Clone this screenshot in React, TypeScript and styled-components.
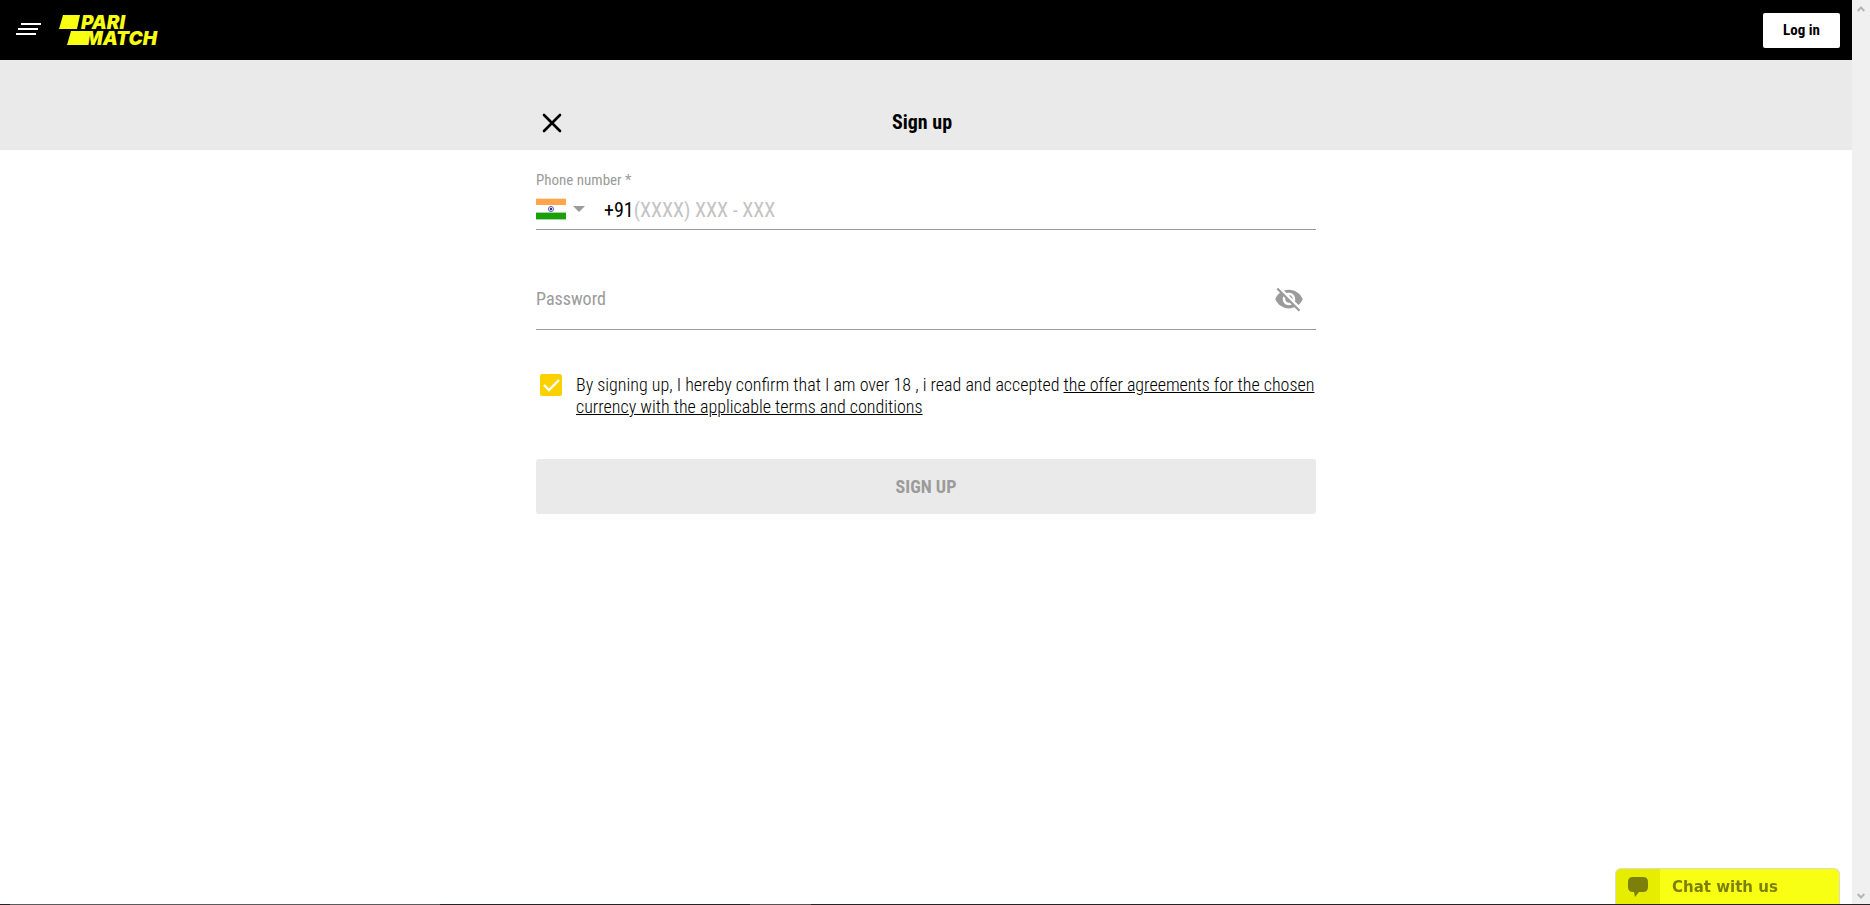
import React, { useState } from "react";
import styled, { createGlobalStyle } from "styled-components";
import { MdVisibilityOff } from "react-icons/md";

const condensed = `"Roboto Condensed", "Liberation Sans Narrow", Roboto, sans-serif`;

const GlobalStyle = createGlobalStyle`
  *, *::before, *::after { box-sizing: border-box; }
  body { margin: 0; background: #fff; color: #000; font-family: ${condensed}; }
  button, input, select { font-family: inherit; margin: 0; }
`;

const Shell = styled.div`
  display: flex;
  min-height: 100vh;
`;

const Page = styled.div`
  flex: 1;
  min-width: 0;
`;

const TopBar = styled.header`
  display: flex;
  align-items: center;
  height: 60px;
  padding: 0 12px 0 14px;
  background: #000;
`;

const IconButton = styled.button`
  display: flex;
  padding: 0;
  border: 0;
  background: none;
  color: inherit;
  cursor: pointer;
`;

const LogoLink = styled.a`
  display: flex;
  margin-left: 17px;
`;

const LoginButton = styled.button`
  width: 77px;
  height: 35px;
  margin-left: auto;
  padding: 0;
  border: 0;
  border-radius: 2px;
  background: #fff;
  color: #000;
  font-size: 15px;
  font-weight: 700;
`;

const TitleBand = styled.div`
  display: flex;
  align-items: flex-end;
  height: 90px;
  background: #eaeaea;
`;

const Column = styled.div`
  width: 100%;
  max-width: 780px;
  margin: 0 auto;
`;

const TitleRow = styled(Column)`
  display: grid;
  grid-template-columns: 32px 1fr 40px;
  align-items: center;
  height: 56px;
`;

const Title = styled.h1`
  margin: 0;
  font-size: 20px;
  line-height: 24px;
  font-weight: 700;
  text-align: center;
`;

const Form = styled.form`
  display: flex;
  flex-direction: column;
  padding-top: 20px;
`;

const Field = styled.div`
  border-bottom: 1px solid #9b9b9b;
`;

const FieldLabel = styled.label`
  display: block;
  color: #9b9b9b;
  font-size: 15px;
  line-height: 20px;
`;

const FieldRow = styled.div`
  display: flex;
  align-items: center;
  height: 39px;
`;

const Country = styled.div`
  position: relative;
  display: flex;
  align-items: center;
  gap: 7px;
  width: 68px;
  padding-bottom: 2px;
`;

const CountrySelect = styled.select`
  position: absolute;
  inset: 0;
  width: 100%;
  opacity: 0;
`;

const DialCode = styled.span`
  font-size: 20px;
`;

const TextInput = styled.input<{ $size: number; $hint: string }>`
  flex: 1;
  min-width: 0;
  padding: 0;
  border: 0;
  outline: 0;
  background: none;
  color: #000;
  font-size: ${(p) => p.$size}px;
  &::placeholder {
    color: ${(p) => p.$hint};
    opacity: 1;
  }
`;

const PasswordField = styled(Field)`
  display: flex;
  align-items: center;
  height: 64px;
  margin-top: 36px;
  padding: 2px 12px 0 0;
  color: #9b9b9b;
`;

const Consent = styled.div`
  display: flex;
  align-items: flex-start;
  gap: 14px;
  margin-top: 44px;
  padding-left: 4px;
`;

const CheckWrap = styled.span`
  position: relative;
  display: flex;
  flex: none;
`;

const Checkbox = styled.input`
  appearance: none;
  width: 22px;
  height: 22px;
  margin: 0;
  border: 2px solid #fcd100;
  border-radius: 2px;
  &:checked { background: #fcd100; }
`;

const CheckMark = styled.svg`
  position: absolute;
  inset: 0;
  pointer-events: none;
`;

const ConsentText = styled.label`
  color: #000;
  font-size: 18px;
  font-weight: 300;
  line-height: 22px;
  a { color: inherit; }
`;

const SubmitButton = styled.button`
  height: 55px;
  margin-top: 41px;
  border: 0;
  border-radius: 3px;
  background: #eaeaea;
  color: #9b9b9b;
  font-size: 18px;
  font-weight: 700;
`;

const ScrollTrack = styled.div`
  display: flex;
  flex-direction: column;
  justify-content: space-between;
  align-items: center;
  width: 18px;
  padding: 5px 0;
  background: #f0f0f0;
`;

const ChatButton = styled.button`
  position: fixed;
  right: 30px;
  bottom: 0;
  display: flex;
  width: 225px;
  height: 37px;
  padding: 0;
  overflow: hidden;
  border: 1px solid #dcdcc8;
  border-bottom: 0;
  border-radius: 6px 6px 0 0;
  background: #f8ff13;
  color: #7c800a;
`;

const ChatIcon = styled.span`
  display: flex;
  align-items: center;
  justify-content: center;
  width: 44px;
  height: 100%;
  background: #e6ed00;
`;

const ChatText = styled.span`
  padding-left: 12px;
  font-family: "DejaVu Sans", Verdana, sans-serif;
  font-size: 15px;
  line-height: 36px;
  font-weight: 700;
`;

const BottomEdge = styled.div`
  position: fixed;
  left: 0;
  right: 0;
  bottom: 0;
  height: 1px;
  background: linear-gradient(90deg, #2b2024 10px, #5c5a5b 10px 440px, #2b2024 440px 750px, #5c5052 750px 811px, #2b2024 811px);
`;

function Logo() {
  return (
    <svg width="110" height="44" viewBox="0 0 110 44" fill="#f8ff13" role="img" aria-label="Parimatch">
      <path d="M4 7H21L18 21H0Z" />
      <path d="M12 23H30L27 37H8Z" />
      <g fontFamily="Inter" fontSize="19" fontWeight="900" fontStyle="italic" textAnchor="end">
        <text x="66" y="21">PARI</text>
        <text x="98" y="37">MATCH</text>
      </g>
    </svg>
  );
}

function IndiaFlag() {
  return (
    <svg width="30" height="22" viewBox="0 0 30 22" aria-hidden="true">
      <path fill="#ffa44a" d="M0 1h30v6H0z" />
      <path fill="#ffe0c0" d="M0 0h30v1H0z" />
      <path fill="#1a9f0b" d="M0 15h30v6H0z" />
      <path fill="#a3d89d" d="M0 14h30v1H0zM0 21h30v1H0z" />
      <circle cx="15" cy="11" r="2.6" fill="#e6e6f8" stroke="#6a6abb" />
      <circle cx="15" cy="11" r="1.2" fill="#2a2a98" />
    </svg>
  );
}

function ScrollArrow({ up }: { up?: boolean }) {
  return (
    <svg width="8" height="8" viewBox="0 0 8 8" fill="none" stroke="#b5b5b5" strokeWidth="2" aria-hidden="true">
      <path d={up ? "M.7 6L4 2.5L7.3 6" : "M.7 2L4 5.5L7.3 2"} />
    </svg>
  );
}

export default function App() {
  const [accepted, setAccepted] = useState(true);
  const [visible, setVisible] = useState(false);
  return (
    <>
      <GlobalStyle />
      <Shell>
        <Page>
          <TopBar>
            <IconButton aria-label="Menu">
              <svg width="28" height="16" viewBox="0 0 28 16" fill="none" stroke="#fff" strokeWidth="2">
                <path d="M7 2H27M4 7H24M2 12H22" />
              </svg>
            </IconButton>
            <LogoLink href="#"><Logo /></LogoLink>
            <LoginButton>Log in</LoginButton>
          </TopBar>
          <TitleBand>
            <TitleRow>
              <IconButton aria-label="Close">
                <svg width="32" height="32" viewBox="0 0 32 32" fill="none" stroke="#000" strokeWidth="2.6">
                  <path d="M8 9L24 25M24 9L8 25" strokeLinecap="round" />
                </svg>
              </IconButton>
              <Title>Sign up</Title>
            </TitleRow>
          </TitleBand>
          <Column>
            <Form onSubmit={(e) => e.preventDefault()}>
              <Field>
                <FieldLabel htmlFor="phone">Phone number *</FieldLabel>
                <FieldRow>
                  <Country>
                    <IndiaFlag />
                    <svg width="12" height="6" viewBox="0 0 12 6" aria-hidden="true">
                      <path d="M0 0H12L6 6Z" fill="#9b9b9b" />
                    </svg>
                    <CountrySelect aria-label="Country"><option>India</option></CountrySelect>
                  </Country>
                  <DialCode>+91</DialCode>
                  <TextInput id="phone" type="tel" placeholder="(XXXX) XXX - XXX" $size={20} $hint="#c3c3c3" />
                </FieldRow>
              </Field>
              <PasswordField>
                <TextInput
                  type={visible ? "text" : "password"}
                  aria-label="Password"
                  placeholder="Password"
                  $size={18}
                  $hint="#9b9b9b"
                />
                <IconButton type="button" aria-label="Show password" onClick={() => setVisible(!visible)}>
                  <MdVisibilityOff size={30} />
                </IconButton>
              </PasswordField>
              <Consent>
                <CheckWrap>
                  <Checkbox id="consent" type="checkbox" checked={accepted} onChange={() => setAccepted(!accepted)} />
                  <CheckMark width="22" height="22" viewBox="0 0 22 22" fill="none" stroke="#fff" strokeWidth="2.4">
                    <path d="M4 11L9 16L19 6" />
                  </CheckMark>
                </CheckWrap>
                <ConsentText htmlFor="consent">
                  By signing up, I hereby confirm that I am over 18 , i read and accepted{" "}
                  <a href="#">the offer agreements for the chosen currency with the applicable terms and conditions</a>
                </ConsentText>
              </Consent>
              <SubmitButton type="submit">SIGN UP</SubmitButton>
            </Form>
          </Column>
        </Page>
        <ScrollTrack>
          <ScrollArrow up />
          <ScrollArrow />
        </ScrollTrack>
      </Shell>
      <ChatButton>
        <ChatIcon>
          <svg width="20" height="20" viewBox="0 0 20 20" fill="#7c800a" aria-hidden="true">
            <path d="M5 0H15Q20 0 20 5V10Q20 15 15 15H11L7 20L6 15H5Q0 15 0 10V5Q0 0 5 0Z" />
          </svg>
        </ChatIcon>
        <ChatText>Chat with us</ChatText>
      </ChatButton>
      <BottomEdge />
    </>
  );
}
